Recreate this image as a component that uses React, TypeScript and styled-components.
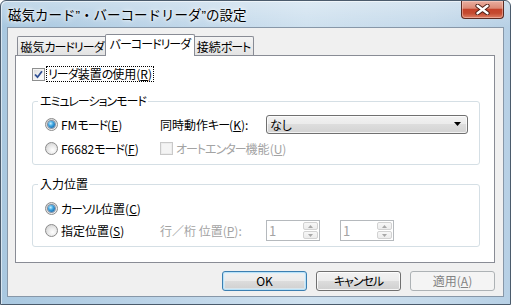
import React from "react";
import styled, { createGlobalStyle, css } from "styled-components";

const GlobalStyle = createGlobalStyle`
  html, body { margin: 0; padding: 0; }
  body {
    width: 511px;
    height: 305px;
    overflow: hidden;
    background: #ffffff;
    font-family: "Noto Sans CJK JP", "Noto Sans", sans-serif;
    font-size: 12px;
    font-feature-settings: "palt";
    color: #000;
  }
  * { box-sizing: border-box; }
`;

const Kana = styled.span`
  letter-spacing: -1px;
`;

const KANA = /([\u3040-\u30ff]+)/;
const jp = (s: string) =>
  s.split(KANA).map((part, i) => (i % 2 === 1 ? <Kana key={i}>{part}</Kana> : part));

const Window = styled.div`
  width: 511px;
  height: 305px;
  display: flex;
  flex-direction: column;
  border: 1px solid #4b5b6c;
  border-radius: 6px 6px 0 0;
  padding: 0 6px 7px 6px;
  background:
    linear-gradient(to bottom, rgba(255, 255, 255, 0.3), rgba(255, 255, 255, 0) 26px),
    linear-gradient(to right, #a9c8e0 0%, #bcd4e8 30%, #cfe1ef 60%, #c4d9ea 85%, #b7d0e5 100%);
  box-shadow: inset 1px 1px 0 rgba(255, 255, 255, 0.55);
`;

const TitleBar = styled.div`
  height: 26px;
  flex: none;
  display: flex;
  justify-content: space-between;
  align-items: flex-start;
`;

const Title = styled.div`
  font-family: "Liberation Sans", "Noto Sans CJK JP", sans-serif;
  font-feature-settings: normal;
  font-size: 13.5px;
  line-height: 15px;
  padding: 7px 0 0 1px;
  white-space: nowrap;
  text-shadow: 0 0 7px #fff, 0 0 3px #fff;
`;

const CloseButton = styled.div`
  width: 43px;
  height: 18px;
  border: 1px solid #5b2a22;
  border-top: none;
  border-radius: 0 0 4px 4px;
  background: linear-gradient(
    to bottom,
    #e9aea0 0%,
    #dc8a76 42%,
    #c5432b 50%,
    #c44a30 72%,
    #dd7e64 100%
  );
  box-shadow: inset 0 0 0 1px rgba(255, 220, 210, 0.45);
  display: flex;
  align-items: center;
  justify-content: center;
`;

const Client = styled.div`
  flex: 1;
  display: flex;
  flex-direction: column;
  background: #f0f0f0;
  border: 1px solid #8797a8;
  padding: 6px 8px 5px 7px;
`;

const TabStrip = styled.div`
  height: 21px;
  flex: none;
  display: flex;
  align-items: flex-end;
  padding-left: 2px;
  position: relative;
  z-index: 1;
`;

const Tab = styled.div<{ $w: number; $active?: boolean }>`
  width: ${(p) => p.$w}px;
  height: 19px;
  border: 1px solid #898c95;
  border-bottom: none;
  border-radius: 2px 2px 0 0;
  background: linear-gradient(#f4f4f4, #e3e3e3);
  display: flex;
  align-items: center;
  justify-content: center;
  padding-top: 1px;
  white-space: nowrap;
  line-height: 14px;
  ${(p) =>
    p.$active &&
    css`
      height: 22px;
      margin: 0 -2px -1px -2px;
      padding-top: 0;
      padding-bottom: 3px;
      background: #ffffff;
      position: relative;
      z-index: 1;
    `}
`;

const Panel = styled.div`
  height: 208px;
  flex: none;
  background: #ffffff;
  border: 1px solid #898c95;
  padding: 10px 14px 0 16px;
  display: flex;
  flex-direction: column;
`;

const CheckRow = styled.label`
  height: 16px;
  display: flex;
  align-items: center;
`;

const CheckBox = styled.span<{ $disabled?: boolean }>`
  width: 13px;
  height: 13px;
  flex: none;
  border: 1px solid ${(p) => (p.$disabled ? "#c9c9c9" : "#8e8f8f")};
  background: ${(p) =>
    p.$disabled
      ? "#f4f4f4"
      : "linear-gradient(135deg, #d9d9d9 0%, #f2f2f2 55%, #ffffff 100%)"};
  box-shadow: inset 0 0 0 1px ${(p) => (p.$disabled ? "#ececec" : "#f4f4f4")};
  display: flex;
  align-items: center;
  justify-content: center;
`;

const FocusText = styled.span`
  margin-left: 1px;
  padding: 0 1px;
  line-height: 14px;
  border: 1px dotted #000;
  white-space: nowrap;
`;

const Group = styled.fieldset<{ $top: number; $pt: number; $pb: number }>`
  margin: ${(p) => p.$top}px 0 0 0;
  min-width: 0;
  border: 1px solid #d5dfe5;
  border-radius: 3px;
  padding: ${(p) => p.$pt}px 11px ${(p) => p.$pb}px 12px;
`;

const Legend = styled.legend`
  padding: 0 2px;
  margin-left: -7px;
  line-height: 14px;
  font-size: 12px;
`;

const Grid = styled.div<{ $rows: string; $gap: number }>`
  display: grid;
  grid-template-columns: 115px 106px 1fr;
  grid-template-rows: ${(p) => p.$rows};
  row-gap: ${(p) => p.$gap}px;
  align-items: center;
`;

const Option = styled.label<{ $disabled?: boolean; $span?: number }>`
  display: flex;
  align-items: center;
  gap: 3px;
  white-space: nowrap;
  color: ${(p) => (p.$disabled ? "#a3a3a3" : "#000")};
  ${(p) => p.$span && css`grid-column: span ${p.$span};`}
`;

const RadioMark = styled.span<{ $checked?: boolean }>`
  width: 13px;
  height: 13px;
  flex: none;
  border-radius: 50%;
  border: 1px solid #8b8b8b;
  background: radial-gradient(circle at 60% 65%, #ffffff 0%, #e9e9e9 45%, #c9c9c9 100%);
  display: flex;
  align-items: center;
  justify-content: center;
  &::after {
    content: "";
    display: ${(p) => (p.$checked ? "block" : "none")};
    width: 7px;
    height: 7px;
    border-radius: 50%;
    background: radial-gradient(circle at 38% 35%, #c4f0ff 0%, #3ba3e0 40%, #0f4d8c 100%);
    box-shadow: 0 0 0 1px rgba(30, 60, 100, 0.5);
  }
`;

const Label = styled.span<{ $disabled?: boolean }>`
  white-space: nowrap;
  color: ${(p) => (p.$disabled ? "#a3a3a3" : "#000")};
`;

const Combo = styled.div`
  height: 19px;
  border: 1px solid #707070;
  border-radius: 3px;
  background: linear-gradient(#f2f2f2 0%, #ebebeb 50%, #dddddd 50%, #d3d3d3 100%);
  box-shadow: inset 0 0 0 1px rgba(255, 255, 255, 0.7);
  display: flex;
  align-items: center;
  justify-content: space-between;
  padding: 0 6px 0 3px;
`;

const SpinRow = styled.div`
  display: flex;
  align-items: center;
  gap: 20px;
`;

const Spin = styled.div`
  width: 54px;
  height: 21px;
  border: 1px solid #b5b9bd;
  background: #ffffff;
  display: flex;
  padding: 1px;
`;

const SpinValue = styled.span`
  flex: 1;
  color: #a3a3a3;
  padding-left: 1px;
  line-height: 17px;
  font-size: 13px;
`;

const SpinButtons = styled.div`
  width: 15px;
  display: flex;
  flex-direction: column;
  gap: 1px;
`;

const SpinButton = styled.span`
  flex: 1;
  border: 1px solid #d2d2d2;
  border-radius: 2px;
  background: linear-gradient(#f7f7f7, #ececec);
  display: flex;
  align-items: center;
  justify-content: center;
`;

const ButtonRow = styled.div`
  margin-top: 8px;
  height: 20px;
  display: flex;
  justify-content: flex-end;
  gap: 9px;
`;

const Button = styled.button<{ $default?: boolean }>`
  width: 85px;
  height: 20px;
  padding: 0;
  font: inherit;
  font-size: 12px;
  line-height: 16px;
  color: #000;
  border: 1px solid #707070;
  border-radius: 3px;
  background: linear-gradient(#f2f2f2 0%, #ebebeb 50%, #dddddd 50%, #cfcfcf 100%);
  box-shadow: inset 0 0 0 1px rgba(255, 255, 255, 0.8);
  ${(p) =>
    p.$default &&
    css`
      border-color: #3c7fb1;
      box-shadow: inset 0 0 0 1px #b9e2f8, inset 0 0 0 2px rgba(220, 240, 252, 0.6);
    `}
  &:disabled {
    border-color: #adb2b5;
    background: #f4f4f4;
    color: #838383;
    box-shadow: none;
  }
`;

const Checkmark = () => (
  <svg width="9" height="9" viewBox="0 0 9 9">
    <path d="M1 4.5 L3.5 7.2 L8 1.2" fill="none" stroke="#2f4f93" strokeWidth="1.8" />
  </svg>
);

const CloseGlyph = () => (
  <svg width="15" height="11" viewBox="0 0 15 11">
    <path d="M2.5 1.8 L12.5 9.2 M12.5 1.8 L2.5 9.2" stroke="#4a1c14" strokeWidth="4.2" strokeLinecap="round" />
    <path d="M2.5 1.8 L12.5 9.2 M12.5 1.8 L2.5 9.2" stroke="#ffffff" strokeWidth="2.4" strokeLinecap="round" />
  </svg>
);

const DropArrow = () => (
  <svg width="7" height="4" viewBox="0 0 7 4">
    <path d="M0 0 H7 L3.5 4 Z" fill="#000" />
  </svg>
);

const SmallArrow = ({ up }: { up?: boolean }) => (
  <svg width="5" height="3" viewBox="0 0 5 3">
    <path d={up ? "M0 3 H5 L2.5 0 Z" : "M0 0 H5 L2.5 3 Z"} fill="#a8a8a8" />
  </svg>
);

const SpinBox = ({ value }: { value: string }) => (
  <Spin>
    <SpinValue>{value}</SpinValue>
    <SpinButtons>
      <SpinButton>
        <SmallArrow up />
      </SpinButton>
      <SpinButton>
        <SmallArrow />
      </SpinButton>
    </SpinButtons>
  </Spin>
);

export default function App() {
  return (
    <>
      <GlobalStyle />
      <Window>
        <TitleBar>
          <Title>磁気カード”・バーコードリーダ”の設定</Title>
          <CloseButton>
            <CloseGlyph />
          </CloseButton>
        </TitleBar>
        <Client>
          <TabStrip>
            <Tab $w={90}>{jp("磁気カードリーダ")}</Tab>
            <Tab $w={90} $active>
              {jp("バーコードリーダ")}
            </Tab>
            <Tab $w={61}>{jp("接続ポート")}</Tab>
          </TabStrip>
          <Panel>
            <CheckRow>
              <CheckBox>
                <Checkmark />
              </CheckBox>
              <FocusText>
                {jp("リーダ装置の使用")}(<u>R</u>)
              </FocusText>
            </CheckRow>

            <Group $top={12} $pt={6} $pb={6}>
              <Legend>{jp("エミュレーションモード")}</Legend>
              <Grid $rows="20px 20px" $gap={4}>
                <Option>
                  <RadioMark $checked />
                  <span>
                    FM{jp("モード")}(<u>E</u>)
                  </span>
                </Option>
                <Label>
                  {jp("同時動作キー")}(<u>K</u>):
                </Label>
                <Combo>
                  <span>なし</span>
                  <DropArrow />
                </Combo>
                <Option>
                  <RadioMark />
                  <span>
                    F6682{jp("モード")}(<u>F</u>)
                  </span>
                </Option>
                <Option $disabled $span={2}>
                  <CheckBox $disabled />
                  <span>
                    {jp("オートエンター機能")}(<u>U</u>)
                  </span>
                </Option>
              </Grid>
            </Group>

            <Group $top={12} $pt={7} $pb={5}>
              <Legend>入力位置</Legend>
              <Grid $rows="20px 21px" $gap={2}>
                <Option $span={3}>
                  <RadioMark $checked />
                  <span>
                    {jp("カーソル位置")}(<u>C</u>)
                  </span>
                </Option>
                <Option>
                  <RadioMark />
                  <span>
                    指定位置(<u>S</u>)
                  </span>
                </Option>
                <Label $disabled>
                  行／桁 位置(<u>P</u>):
                </Label>
                <SpinRow>
                  <SpinBox value="1" />
                  <SpinBox value="1" />
                </SpinRow>
              </Grid>
            </Group>
          </Panel>
          <ButtonRow>
            <Button $default>OK</Button>
            <Button>{jp("キャンセル")}</Button>
            <Button disabled>
              適用(<u>A</u>)
            </Button>
          </ButtonRow>
        </Client>
      </Window>
    </>
  );
}
